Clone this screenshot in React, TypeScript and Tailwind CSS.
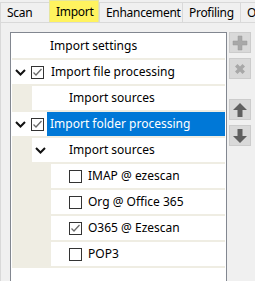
import type { ReactNode } from "react";

const font = { fontFamily: '"Noto Sans", "Open Sans", sans-serif' };

function Chevron() {
  return (
    <svg width="11" height="7" viewBox="0 0 11 7" className="shrink-0">
      <path d="M1 1 L5.5 5.5 L10 1" fill="none" stroke="#111" strokeWidth="2" />
    </svg>
  );
}

function Box({ checked }: { checked?: boolean }) {
  return (
    <span className="flex h-[13px] w-[13px] shrink-0 items-center justify-center border border-[#333] bg-white">
      {checked && (
        <svg width="11" height="11" viewBox="0 0 11 11">
          <path d="M1.5 5.5 L4 8 L9.5 2" fill="none" stroke="#6b6b6b" strokeWidth="1.3" />
        </svg>
      )}
    </span>
  );
}

function Row({ indent, children }: { indent: number; children: ReactNode }) {
  return (
    <div className="flex h-[26px] border-b-2 border-[#efede3]">
      {indent > 0 && <div className="shrink-0 bg-[#efede3]" style={{ width: indent }} />}
      <div className="flex flex-1 items-center bg-white">{children}</div>
    </div>
  );
}

function SideButton({ children }: { children: ReactNode }) {
  return (
    <div className="flex h-[21px] w-[22px] items-center justify-center border border-[#cccccc] bg-[#d9d9d9]">
      {children}
    </div>
  );
}

export default function App() {
  const tabs = [
    { label: "Scan", w: "w-[49px]" },
    { label: "Import", w: "w-[50px]", active: true },
    { label: "Enhancement", w: "w-[83px]" },
    { label: "Profiling", w: "w-[58px]" },
    { label: "O", w: "w-[30px]" },
  ];

  return (
    <div className="relative h-[281px] w-[255px] overflow-hidden bg-[#f0f0f0] text-[12px] text-black" style={font}>
      <div className="flex h-[22px] items-end tracking-[-0.3px]">
        {tabs.map((t) =>
          t.active ? (
            <div
              key={t.label}
              className={`${t.w} flex h-[22px] shrink-0 items-center border-x border-t border-[#e6e6a0] bg-[#fff35f] pl-[6px]`}
            >
              {t.label}
            </div>
          ) : (
            <div
              key={t.label}
              className={`${t.w} flex h-[20px] shrink-0 items-center border-l border-t border-[#d9d9d9] bg-[#f0f0f0] pl-[6px]`}
            >
              {t.label}
            </div>
          )
        )}
      </div>
      <div className="flex h-[259px] border-l border-t border-[#d9d9d9] pl-[9px] pt-[9px]">
        <div className="h-[260px] w-[217px] shrink-0 border border-[#828790] bg-white p-px">
          <Row indent={0}>
            <span className="pl-[38px]">Import settings</span>
          </Row>
          <Row indent={0}>
            <span className="ml-[3px]"><Chevron /></span>
            <span className="ml-[5px]"><Box checked /></span>
            <span className="ml-[7px]">Import file processing</span>
          </Row>
          <Row indent={20}>
            <span className="pl-[37px]">Import sources</span>
          </Row>
          <div className="flex h-[26px] border-b-2 border-[#efede3]">
            <div className="flex w-[35px] shrink-0 items-center bg-white">
              <span className="ml-[3px]"><Chevron /></span>
              <span className="ml-[5px]"><Box checked /></span>
            </div>
            <div className="flex flex-1 items-center bg-[#0078d7] pl-[3px] text-white">Import folder processing</div>
          </div>
          <Row indent={20}>
            <span className="ml-[3px]"><Chevron /></span>
            <span className="ml-[23px]">Import sources</span>
          </Row>
          <Row indent={39}>
            <span className="ml-[18px]"><Box /></span>
            <span className="ml-[6px]">IMAP @ ezescan</span>
          </Row>
          <Row indent={39}>
            <span className="ml-[18px]"><Box /></span>
            <span className="ml-[6px]">Org @ Office 365</span>
          </Row>
          <Row indent={39}>
            <span className="ml-[18px]"><Box checked /></span>
            <span className="ml-[6px]">O365 @ Ezescan</span>
          </Row>
          <Row indent={39}>
            <span className="ml-[18px]"><Box /></span>
            <span className="ml-[6px]">POP3</span>
          </Row>
        </div>
        <div className="ml-[2px] flex flex-col">
          <SideButton>
            <svg width="16" height="16" viewBox="0 0 16 16">
              <path d="M6 1h4v5h5v4h-5v5H6v-5H1V6h5z" fill="#a8a8a8" stroke="#9a9a9a" strokeWidth="0.5" />
            </svg>
          </SideButton>
          <div className="h-[5px]" />
          <SideButton>
            <svg width="14" height="14" viewBox="0 0 14 14">
              <path d="M2 4.5L4.5 2L7 4.5L9.5 2L12 4.5L9.5 7L12 9.5L9.5 12L7 9.5L4.5 12L2 9.5L4.5 7z" fill="#a8a8a8" />
            </svg>
          </SideButton>
          <div className="h-[20px]" />
          <SideButton>
            <svg width="16" height="16" viewBox="0 0 16 16">
              <path d="M8 1L15 8H10.5V15H5.5V8H1z" fill="#606060" />
            </svg>
          </SideButton>
          <div className="h-[5px]" />
          <SideButton>
            <svg width="16" height="16" viewBox="0 0 16 16">
              <path d="M8 15L15 8H10.5V1H5.5V8H1z" fill="#606060" />
            </svg>
          </SideButton>
        </div>
      </div>
    </div>
  );
}
